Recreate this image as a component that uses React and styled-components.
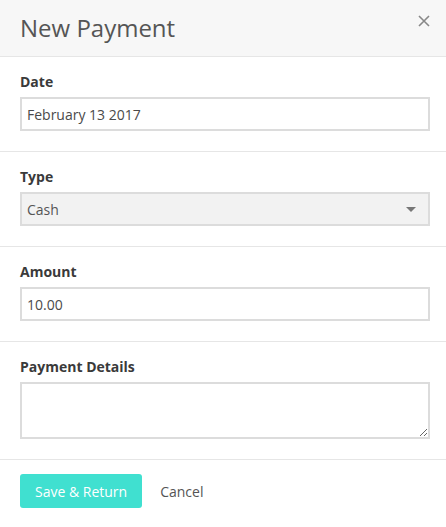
import React from "react";
import styled, { createGlobalStyle } from "styled-components";

const GlobalStyle = createGlobalStyle`
  body {
    margin: 0;
    background: #fff;
    font-family: "Open Sans", "Liberation Sans", sans-serif;
  }
`;

const Modal = styled.div`
  width: 446px;
  background: #fff;
`;

const Header = styled.div`
  height: 57px;
  box-sizing: border-box;
  display: flex;
  align-items: center;
  justify-content: space-between;
  padding: 0 14px 0 20px;
  background: #f7f7f7;
  border-bottom: 1px solid #e6e6e6;
`;

const Title = styled.h2`
  margin: 0;
  font-size: 24px;
  font-weight: 400;
  color: #555;
  line-height: 1;
`;

const Close = styled.button`
  border: none;
  background: none;
  padding: 0;
  margin-top: -14px;
  width: 16px;
  height: 16px;
  display: flex;
  align-items: center;
  justify-content: center;
  cursor: pointer;
`;

const Section = styled.div`
  display: flex;
  flex-direction: column;
  gap: 5px;
  padding: 15px 16px 20px 20px;
  border-bottom: 1px solid #e6e6e6;
`;

const Label = styled.label`
  font-size: 14px;
  font-weight: 700;
  line-height: 20px;
  color: #3a3a3a;
`;

const Field = styled.input`
  box-sizing: border-box;
  width: 100%;
  height: 34px;
  padding: 0 5px;
  border: 2px solid #dcdcdc;
  background: #fff;
  font-family: inherit;
  font-size: 14px;
  color: #4a4a4a;
  outline: none;
`;

const SelectBox = styled.div`
  box-sizing: border-box;
  height: 34px;
  display: flex;
  align-items: center;
  justify-content: space-between;
  padding: 0 12px 0 5px;
  border: 2px solid #dcdcdc;
  background: #f2f2f2;
  font-size: 14px;
  color: #555;
`;

const Caret = styled.span`
  width: 0;
  height: 0;
  border-left: 5px solid transparent;
  border-right: 5px solid transparent;
  border-top: 5px solid #777;
`;

const TextArea = styled.textarea`
  box-sizing: border-box;
  width: 100%;
  height: 57px;
  border: 2px solid #dcdcdc;
  font-family: inherit;
  font-size: 14px;
  outline: none;
  resize: vertical;
  display: block;
`;

const Footer = styled.div`
  display: flex;
  align-items: center;
  gap: 18px;
  padding: 14px 20px;
`;

const PrimaryButton = styled.button`
  height: 34px;
  padding: 0 15px;
  border: none;
  border-radius: 3px;
  background: #40e0d0;
  color: #fff;
  font-family: inherit;
  font-size: 14px;
  cursor: pointer;
`;

const LinkButton = styled.button`
  border: none;
  background: none;
  padding: 0;
  font-family: inherit;
  font-size: 14px;
  color: #555;
  cursor: pointer;
`;

export default function App() {
  return (
    <>
      <GlobalStyle />
      <Modal>
        <Header>
          <Title>New Payment</Title>
          <Close aria-label="Close">
            <svg width="12" height="12" viewBox="0 0 12 12">
              <path d="M1 1L11 11M11 1L1 11" stroke="#888" strokeWidth="1.6" />
            </svg>
          </Close>
        </Header>

        <Section>
          <Label>Date</Label>
          <Field defaultValue="February 13 2017" />
        </Section>

        <Section>
          <Label>Type</Label>
          <SelectBox>
            Cash
            <Caret />
          </SelectBox>
        </Section>

        <Section>
          <Label>Amount</Label>
          <Field defaultValue="10.00" />
        </Section>

        <Section>
          <Label>Payment Details</Label>
          <TextArea />
        </Section>

        <Footer>
          <PrimaryButton>Save &amp; Return</PrimaryButton>
          <LinkButton>Cancel</LinkButton>
        </Footer>
      </Modal>
    </>
  );
}
